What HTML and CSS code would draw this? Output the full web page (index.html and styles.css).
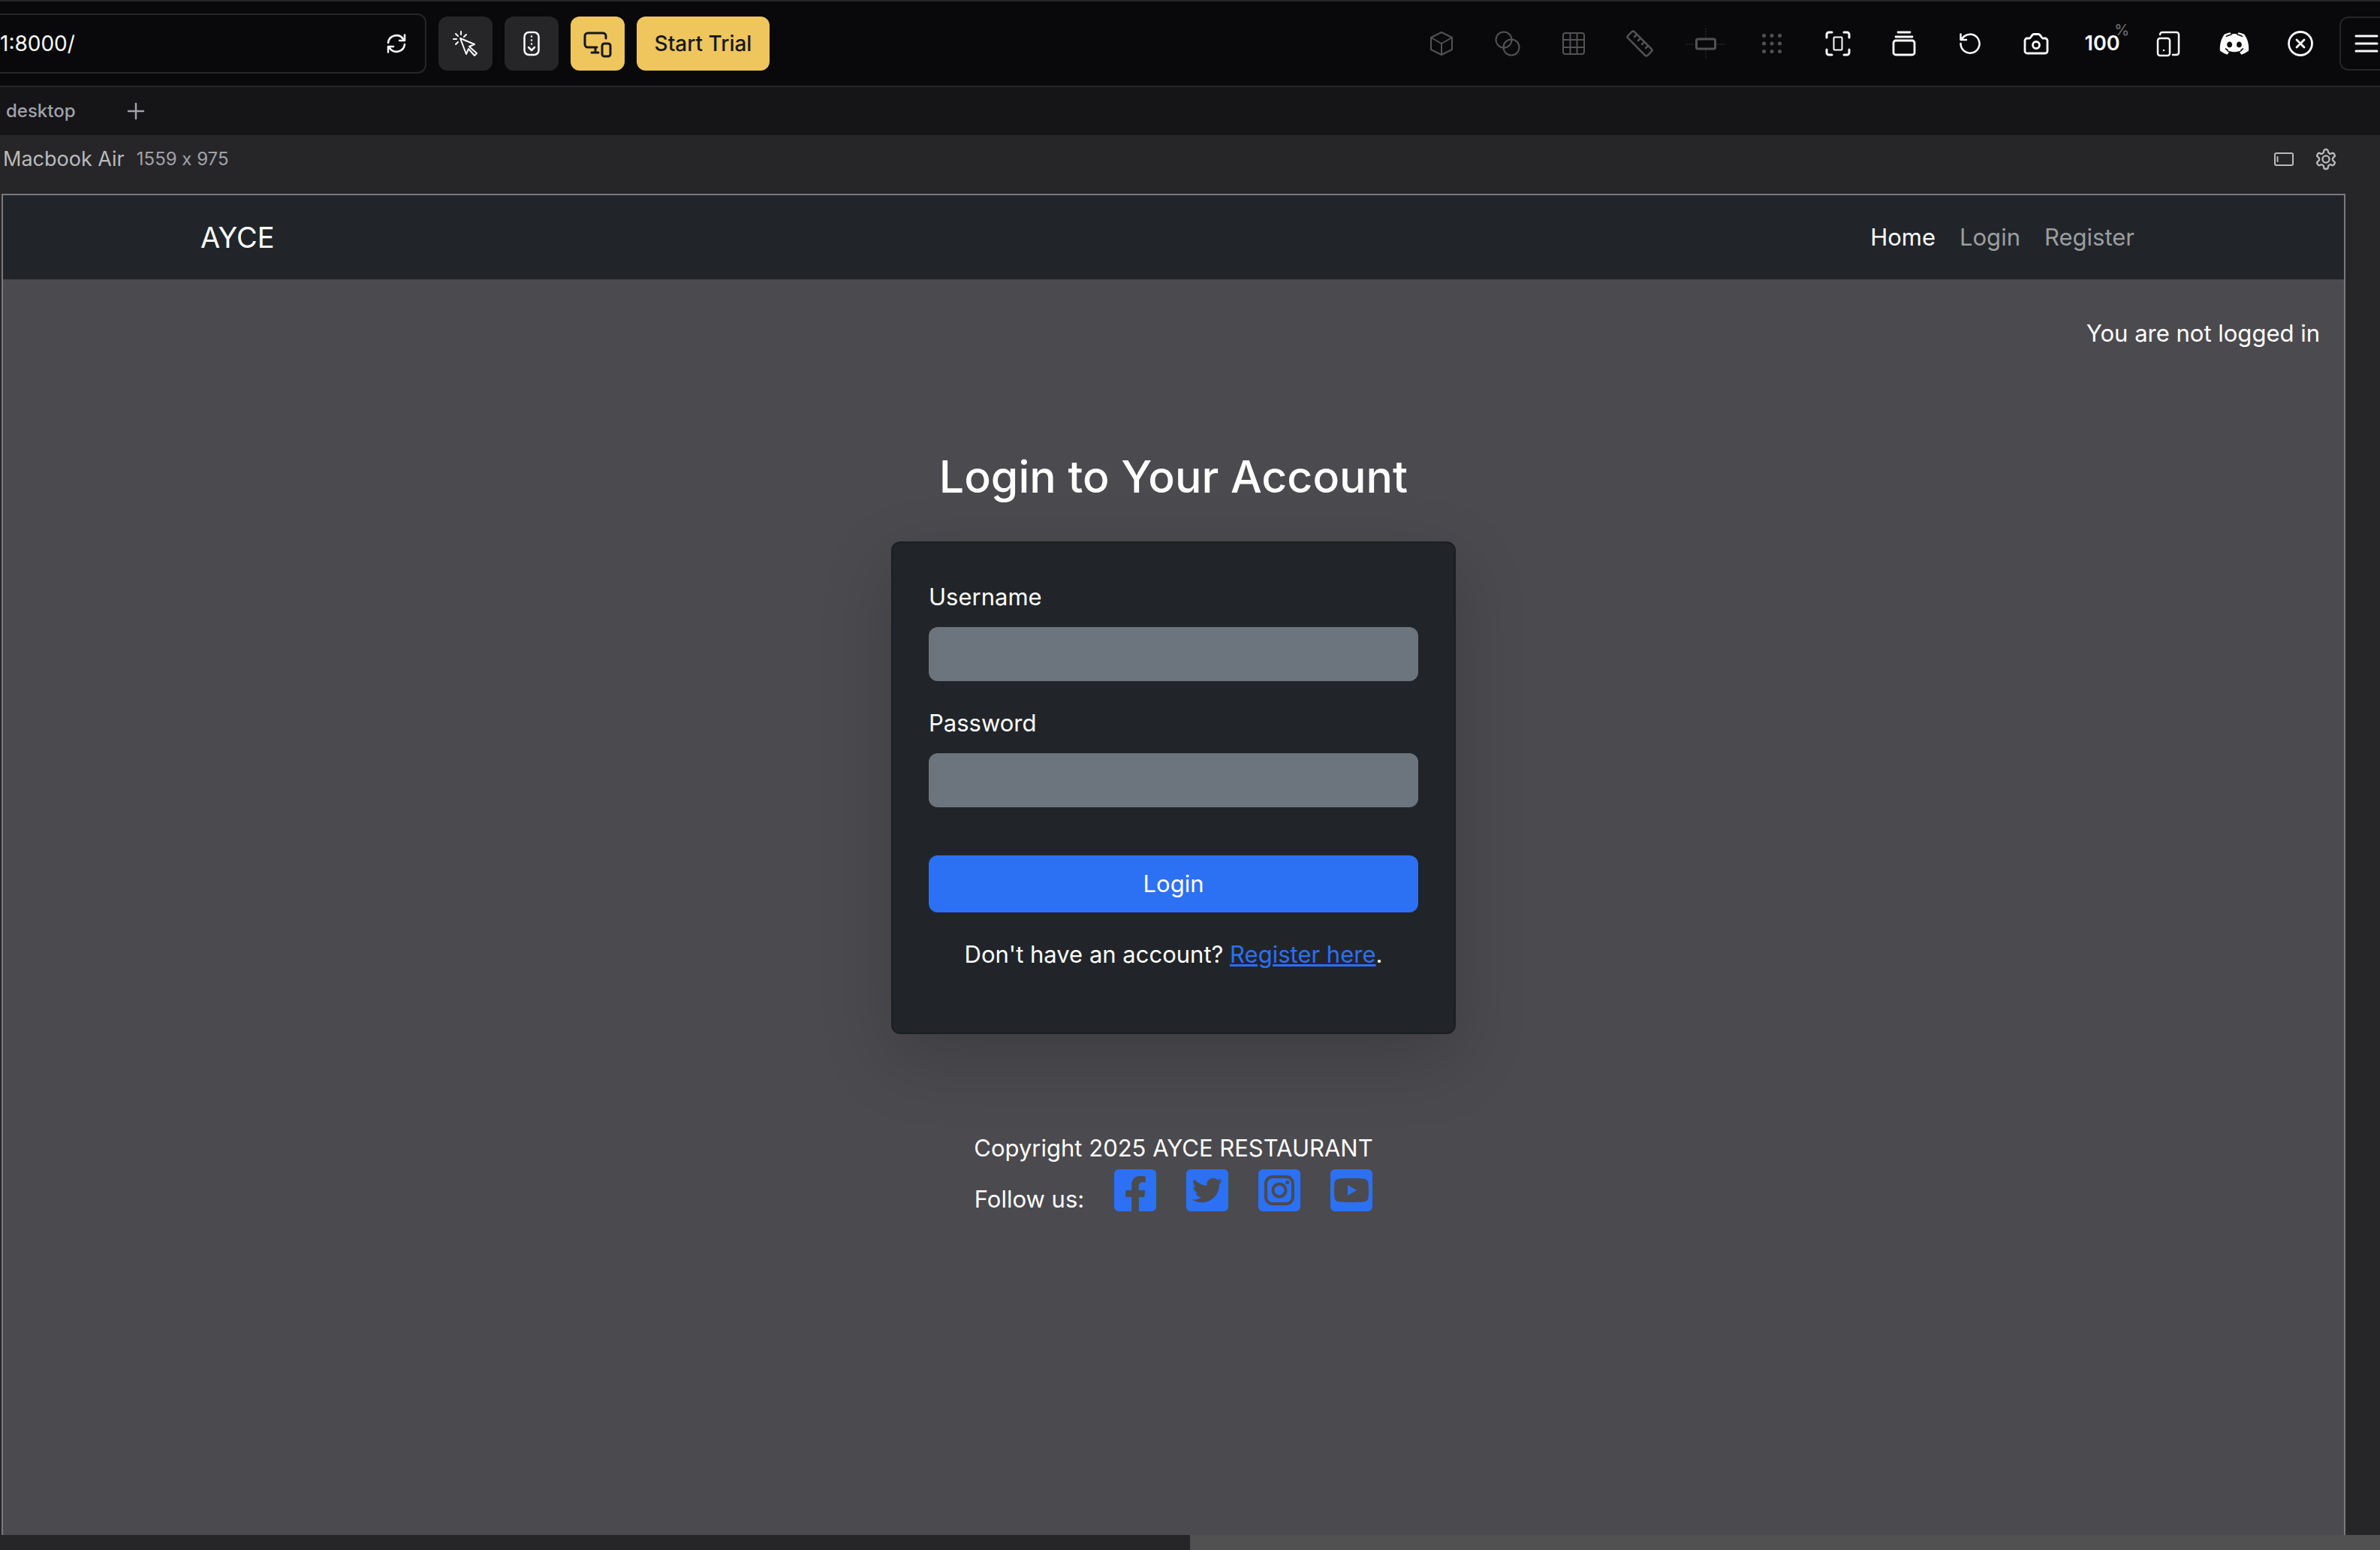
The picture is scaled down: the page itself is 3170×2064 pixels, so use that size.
FILE: index.html
```html
<!DOCTYPE html>
<html lang="en">
<head>
<meta charset="utf-8">
<title>AYCE - Login</title>
<link rel="stylesheet" href="styles.css">
</head>
<body>
<header class="toolbar">
  <div class="address">
    <input class="address-input" type="text" aria-label="Address" value="1:8000/">
    <button class="address-reload" aria-label="Reload">
      <svg class="icon" viewBox="-20 -20 40 40" stroke-width="2.5"><path d="M-11-1A11 11 0 0 1 9-6L11-4M11-11.500V-4H4M11 1A11 11 0 0 1-9 6L-11 4M-11 11.500V4H-4"/></svg>
    </button>
  </div>
  <button class="tool tool-filled" aria-label="Inspect">
    <svg class="icon" viewBox="-20 -20 40 40" stroke-width="2"><path d="M-7-7 12 1 5 4 15 13 12 16 4 7 1 14Z"/><path d="M-6-16V-12M1-12 -2-9M-16-6H-12M-13-13-10-10M-13 1-10-2"/></svg>
  </button>
  <button class="tool tool-filled" aria-label="Scroll sync">
    <svg class="icon" viewBox="-20 -20 40 40" stroke-width="2.500"><rect x="-9.500" y="-15" width="19" height="30" rx="6"/><path d="M-4 5 0 9 4 5M0-9.500h.01M0-4.500h.01M0 .5h.01"/></svg>
  </button>
  <button class="tool tool-accent" aria-label="Devices">
    <svg class="icon" viewBox="-20 -20 40 40" stroke-width="3"><path d="M-1 5H-13A4 4 0 0 1-17 1V-10A4 4 0 0 1-13-14H7A4 4 0 0 1 11-10V-7M-3 5V12M-8 12H1"/><rect x="6" y="0" width="11" height="17" rx="3"/></svg>
  </button>
  <button class="tool tool-accent tool-trial">Start Trial</button>

  <div class="tools">
    <button class="tool tool-dim" aria-label="3D view"><svg class="icon" viewBox="-20 -20 40 40" stroke-width="2"><path d="M0-15 14-8V8L0 15-14 8V-8ZM-14-8 0 0 14-8M0 0V15"/></svg></button>
    <button class="tool tool-dim" aria-label="Overlay"><svg class="icon" viewBox="-20 -20 40 40" stroke-width="2"><circle cx="-5" cy="-5" r="10.500"/><circle cx="5" cy="5" r="10.500"/></svg></button>
    <button class="tool tool-dim" aria-label="Grid"><svg class="icon" viewBox="-20 -20 40 40" stroke-width="2"><rect x="-14" y="-14" width="28" height="28" rx="3"/><path d="M-4.500-14V14M4.500-14V14M-14-5H14M-14 5H14"/></svg></button>
    <button class="tool tool-dim" aria-label="Ruler"><svg class="icon" viewBox="-20 -20 40 40" stroke-width="2.500"><rect x="-18.500" y="-6" width="37" height="12" rx="2.500" transform="rotate(45)"/><path d="M-4-12-7-9M1-7-2-4M6-2 3 1M11 3 8 6"/></svg></button>
    <button class="tool tool-dim" aria-label="Guides"><svg class="icon icon-wide" viewBox="-26 -26 52 52"><rect x="-12.500" y="-6" width="25" height="13" rx="2" stroke-width="3"/><path d="M0-20V-8M0 9V20M-26 1H-15M15 1H26" stroke-width="1.500" stroke-dasharray="1.500 2" stroke-linecap="butt" opacity=".6"/></svg></button>
    <button class="tool tool-dim" aria-label="Dots"><svg class="icon" viewBox="-20 -20 40 40" stroke-width="5"><path d="M-10.500-10.500h.01M0-10.500h.01M10.500-10.500h.01M-10.500 0h.01M0 0h.01M10.500 0h.01M-10.500 10.500h.01M0 10.500h.01M10.500 10.500h.01"/></svg></button>
    <button class="tool" aria-label="Fit to screen"><svg class="icon" viewBox="-20 -20 40 40" stroke-width="3"><path d="M-15-8V-12A3 3 0 0 1-12-15H-8M8-15H12A3 3 0 0 1 15-12V-8M15 8V12A3 3 0 0 1 12 15H8M-8 15H-12A3 3 0 0 1-15 12V8"/><rect x="-5.500" y="-8.500" width="11" height="17" rx="1" stroke-width="2"/></svg></button>
    <button class="tool" aria-label="Stack"><svg class="icon" viewBox="-20 -20 40 40" stroke-width="2.800"><rect x="-14" y="-4" width="28" height="19" rx="3"/><path d="M-11-9H11M-8-15H8"/></svg></button>
    <button class="tool" aria-label="Rotate"><svg class="icon" viewBox="-20 -20 40 40" stroke-width="2.500"><path d="M-12.500 0A12.500 12.500 0 1 0-8.500-9L-12.500-5M-12.500-12.500V-5H-5"/></svg></button>
    <button class="tool" aria-label="Screenshot"><svg class="icon" viewBox="-20 -20 40 40" stroke-width="2.800"><path d="M-12-7H-9C-7-7-6-12.500-3-12.500H3C6-12.500 7-7 9-7H12A3 3 0 0 1 15-4V10A3 3 0 0 1 12 13H-12A3 3 0 0 1-15 10V-4A3 3 0 0 1-12-7Z"/><circle cy="2" r="4.500"/></svg></button>
    <button class="tool tool-zoom" aria-label="Zoom 100%">100<span class="percent">%</span></button>
    <button class="tool" aria-label="Device pair"><svg class="icon" viewBox="-20 -20 40 40" stroke-width="2.500"><path d="M-11-12A3 3 0 0 1-8-15H11A3 3 0 0 1 14-12V12A3 3 0 0 1 11 15H6"/><rect x="-14" y="-7" width="16" height="23" rx="3"/><path d="M-6 9h.01"/></svg></button>
    <button class="tool" aria-label="Discord"><svg class="icon" viewBox="-.5 -.5 25 25"><path fill="currentColor" stroke="none" d="M20.317 4.370a19.791 19.791 0 0 0-4.885-1.515.074.074 0 0 0-.079.037c-.21.375-.444.864-.608 1.250a18.270 18.270 0 0 0-5.487 0 12.640 12.640 0 0 0-.617-1.250.077.077 0 0 0-.079-.037A19.736 19.736 0 0 0 3.677 4.370a.07.07 0 0 0-.032.027C.533 9.046-.32 13.580.099 18.057a.082.082 0 0 0 .031.057 19.900 19.900 0 0 0 5.993 3.030.078.078 0 0 0 .084-.028c.462-.63.874-1.295 1.226-1.994a.076.076 0 0 0-.041-.106 13.107 13.107 0 0 1-1.872-.892.077.077 0 0 1-.008-.128c.126-.094.252-.192.372-.292a.074.074 0 0 1 .077-.010c3.928 1.793 8.180 1.793 12.062 0a.074.074 0 0 1 .078.010c.120.098.246.198.373.292a.077.077 0 0 1-.006.127 12.299 12.299 0 0 1-1.873.892.077.077 0 0 0-.041.107c.36.698.772 1.362 1.225 1.993a.076.076 0 0 0 .084.028 19.839 19.839 0 0 0 6.002-3.030.077.077 0 0 0 .032-.054c.5-5.177-.838-9.674-3.549-13.660a.061.061 0 0 0-.031-.030zM8.020 15.330c-1.183 0-2.157-1.085-2.157-2.419 0-1.333.956-2.419 2.157-2.419 1.210 0 2.176 1.096 2.157 2.420 0 1.333-.956 2.418-2.157 2.418zm7.975 0c-1.183 0-2.157-1.085-2.157-2.419 0-1.333.955-2.419 2.157-2.419 1.210 0 2.176 1.096 2.157 2.420 0 1.333-.946 2.418-2.157 2.418z"/><path class="discord-gap" d="M5.400 6C6.600 5.200 7.800 4.800 9.500 4.500M18.600 6C17.400 5.200 16.200 4.800 14.500 4.500M4.800 16.400 6.500 17.500M19.200 16.400 17.500 17.500"/></svg></button>
    <button class="tool" aria-label="Close"><svg class="icon" viewBox="-20 -20 40 40" stroke-width="2.800"><circle r="15.500"/><path d="M-5-5 5 5M5-5-5 5"/></svg></button>
    <button class="tool tool-menu" aria-label="Menu"><svg class="icon" viewBox="-20 -20 40 40" stroke-width="3"><path d="M-14-10H14M-14 0H14M-14 10H14"/></svg></button>
  </div>
</header>

<div class="tabs">
  <a class="tab" href="#">desktop</a>
  <button class="tab-add" aria-label="New tab"><svg class="icon" viewBox="-20 -20 40 40" stroke-width="2.500"><path d="M-10 0H10M0-10V10"/></svg></button>
</div>

<div class="device">
  <div class="device-bar">
    <span class="device-name">Macbook Air</span>
    <span class="device-size">1559 x 975</span>
    <span class="device-actions">
      <button class="device-button" aria-label="Orientation"><svg class="icon" viewBox="-20 -20 40 40" stroke-width="2"><rect x="-12" y="-8" width="24" height="16" rx="2"/><path d="M-8.500-3V3"/></svg></button>
      <button class="device-button" aria-label="Settings"><svg class="icon" viewBox="-3.400 -3.400 30.800 30.800" stroke-width="1.800"><path d="M12.220 2h-.44a2 2 0 0 0-2 2v.18a2 2 0 0 1-1 1.730l-.43.25a2 2 0 0 1-2 0l-.15-.08a2 2 0 0 0-2.730.73l-.22.38a2 2 0 0 0 .73 2.730l.15.100a2 2 0 0 1 1 1.720v.51a2 2 0 0 1-1 1.740l-.15.090a2 2 0 0 0-.73 2.730l.22.380a2 2 0 0 0 2.730.730l.15-.080a2 2 0 0 1 2 0l.43.250a2 2 0 0 1 1 1.730V20a2 2 0 0 0 2 2h.44a2 2 0 0 0 2-2v-.18a2 2 0 0 1 1-1.730l.43-.25a2 2 0 0 1 2 0l.15.080a2 2 0 0 0 2.730-.730l.22-.390a2 2 0 0 0-.73-2.730l-.15-.080a2 2 0 0 1-1-1.740v-.5a2 2 0 0 1 1-1.740l.15-.090a2 2 0 0 0 .73-2.730l-.22-.380a2 2 0 0 0-2.730-.730l-.15.080a2 2 0 0 1-2 0l-.43-.25a2 2 0 0 1-1-1.730V4a2 2 0 0 0-2-2z"/><circle cx="12" cy="12" r="3.500"/></svg></button>
    </span>
  </div>

  <div class="screen">
    <nav class="navbar">
      <div class="container">
        <a class="brand" href="#">AYCE</a>
        <div class="nav-links">
          <a class="nav-link active" href="#">Home</a>
          <a class="nav-link" href="#">Login</a>
          <a class="nav-link" href="#">Register</a>
        </div>
      </div>
    </nav>

    <p class="user-status">You are not logged in</p>

    <main class="login">
      <h1 class="login-title">Login to Your Account</h1>
      <form class="card">
        <label class="label" for="username">Username</label>
        <input class="field" type="text" id="username">
        <label class="label" for="password">Password</label>
        <input class="field" type="password" id="password">
        <button class="submit" type="button">Login</button>
        <p class="hint">Don't have an account? <a class="link" href="#">Register here</a>.</p>
      </form>
    </main>

    <footer class="footer">
      <p class="copyright">Copyright 2025 AYCE RESTAURANT</p>
      <div class="social">
        <span class="social-label">Follow us:</span>
        <a class="social-link" href="#" aria-label="Facebook"><svg class="social-icon" viewBox="0 32 448 448"><path d="M400 32H48A48 48 0 0 0 0 80v352a48 48 0 0 0 48 48h137.250V327.690h-63V256h63v-54.640c0-62.150 37-96.480 93.670-96.480 27.140 0 55.520 4.840 55.520 4.840v61h-31.270c-30.810 0-40.420 19.120-40.420 38.730V256h68.780l-11 71.690h-57.780V480H400a48 48 0 0 0 48-48V80a48 48 0 0 0-48-48z"/></svg></a>
        <a class="social-link" href="#" aria-label="Twitter"><svg class="social-icon" viewBox="0 32 448 448"><path d="M400 32H48C21.500 32 0 53.500 0 80v352c0 26.500 21.500 48 48 48h352c26.500 0 48-21.500 48-48V80c0-26.500-21.500-48-48-48zm-48.900 158.800c.2 2.800.2 5.700.2 8.500 0 86.700-66 186.600-186.600 186.600-37.200 0-71.700-10.800-100.700-29.400 5.300.6 10.400.8 15.800.8 30.700 0 58.900-10.400 81.400-28-28.800-.6-53-19.500-61.300-45.500 10.100 1.500 19.200 1.500 29.600-1.200-30-6.100-52.500-32.500-52.500-64.400v-.8c8.700 4.900 18.900 7.900 29.600 8.300a65.447 65.447 0 0 1-29.200-54.600c0-12.200 3.200-23.400 8.900-33.100 32.300 39.800 80.800 65.800 135.200 68.600-9.300-44.500 24-80.600 64-80.600 18.900 0 35.900 7.900 47.900 20.700 14.800-2.800 29-8.300 41.600-15.800-4.900 15.200-15.200 28-28.800 36.100 13.200-1.400 26-5.100 37.800-10.200-8.900 13.100-20.100 24.700-32.900 34z"/></svg></a>
        <a class="social-link" href="#" aria-label="Instagram"><svg class="social-icon" viewBox="0 0 56 56"><rect width="56" height="56" rx="6"/><g class="cutout-line"><rect x="10" y="10" width="36" height="36" rx="9"/><circle cx="28" cy="28" r="8.500"/></g><circle class="cutout" cx="38.600" cy="17.400" r="2.500"/></svg></a>
        <a class="social-link" href="#" aria-label="YouTube"><svg class="social-icon" viewBox="0 0 56 56"><rect width="56" height="56" rx="6"/><path class="cutout" d="M28 12C38 12 44 12.300 46 13 48.500 13.700 49.700 15 50.300 17.500 51.200 22 51.200 34 50.300 38.500 49.700 41 48.500 42.300 46 43 42 44.300 14 44.300 10 43 7.500 42.300 6.300 41 5.700 38.500 4.800 34 4.800 22 5.700 17.500 6.300 15 7.500 13.700 10 13 12 12.300 18 12 28 12Z"/><path d="M23 21 35 28 23 35Z"/></svg></a>
      </div>
    </footer>
  </div>
</div>
<div class="scrollbar"><div class="scrollbar-thumb"></div></div>
</body>
</html>
```
FILE: styles.css
```css
* {
  box-sizing: border-box;
}

body {
  display: flex;
  flex-direction: column;
  min-height: 100vh;
  margin: 0;
  overflow-x: hidden;
  background: #262628;
  color: #fff;
  font: 400 31px/48px Inter, "Liberation Sans", sans-serif;
}

p, h1 {
  margin: 0;
}

a {
  color: inherit;
  text-decoration: none;
}

button, input {
  padding: 0;
  border: 0;
  background: none;
  color: inherit;
  font: inherit;
}

.icon {
  display: block;
  flex: none;
  width: 40px;
  height: 40px;
  fill: none;
  stroke: currentColor;
  stroke-linecap: round;
  stroke-linejoin: round;
}

.icon-wide {
  width: 52px;
  height: 52px;
}

.discord-gap {
  stroke: #09090b;
}

/* Browser toolbar */
.toolbar {
  display: flex;
  align-items: center;
  gap: 16px;
  height: 116px;
  border-top: 2px solid #262628;
  border-bottom: 2px solid #262628;
  background: #09090b;
  color: #fafafa;
}

.address {
  display: flex;
  align-items: center;
  width: 568px;
  height: 80px;
  padding-right: 18px;
  border: 2px solid #262628;
  border-left: 0;
  border-radius: 0 12px 12px 0;
}

.address-input {
  flex: 1;
  min-width: 0;
  font-size: 28px;
}

.tool {
  display: flex;
  flex: none;
  align-items: center;
  justify-content: center;
  width: 72px;
  height: 72px;
  border-radius: 12px;
}

.tool-filled {
  background: #262628;
}

.tool-accent {
  background: #eec65d;
  color: #18181b;
}

.tool-trial {
  width: 177px;
  font-size: 28px;
  font-weight: 500;
}

.tools {
  display: flex;
  gap: 16px;
  margin-left: auto;
}

.tool-dim {
  color: #525252;
}

.tool-zoom {
  position: relative;
  font-size: 27px;
  font-weight: 600;
}

.percent {
  position: absolute;
  top: 8px;
  right: 0;
  color: #6b6b6b;
  font-size: 20px;
  font-weight: 500;
  line-height: 20px;
}

.tool-menu {
  justify-content: flex-start;
  width: 54px;
  padding-left: 14px;
  border: 2px solid #262628;
  border-right: 0;
  border-radius: 12px 0 0 12px;
}

/* Tabs */
.tabs {
  display: flex;
  align-items: center;
  gap: 60px;
  height: 64px;
  padding-left: 8px;
  background: #151517;
  color: #a1a1aa;
  font-size: 24px;
  font-weight: 500;
}

/* Device preview */
.device {
  display: flex;
  flex: 1;
  flex-direction: column;
  padding: 0 46px 0 2px;
}

.device-bar {
  display: flex;
  align-items: center;
  gap: 16px;
  height: 78px;
  padding: 0 6px 14px 2px;
}

.device-name {
  color: #bababa;
  font-size: 27px;
}

.device-size {
  color: #a1a1aa;
  font-size: 24px;
  font-feature-settings: "calt" 0;
}

.device-actions {
  display: flex;
  gap: 16px;
  margin-left: auto;
  color: #bababa;
}

.screen {
  flex: 1;
  border: 2px solid #7a7a7d;
  border-bottom: 0;
  background: #4b4a4e;
}

.navbar {
  padding: 0 24px;
  background: #212529;
}

.container {
  display: flex;
  align-items: center;
  justify-content: space-between;
  max-width: 2592px;
  height: 112px;
  margin: 0 auto;
}

.brand {
  font-size: 38px;
}

.nav-links {
  display: flex;
}

.nav-link {
  padding: 0 16px;
  color: #9b9d9f;
}

.nav-link.active {
  color: #fff;
}

.user-status {
  padding: 48px 32px 0;
  text-align: right;
}

/* Login form */
.login {
  width: 752px;
  max-width: 100%;
  margin: 128px auto 0;
}

.login-title {
  margin-bottom: 48px;
  font-size: 59px;
  font-weight: 500;
  line-height: 77px;
  text-align: center;
}

.card {
  display: flex;
  flex-direction: column;
  padding: 48px 48px 80px;
  border: 2px solid #1b1e22;
  border-radius: 12px;
  background: #212529;
  box-shadow: 0 32px 96px rgba(0, 0, 0, 0.175);
}

.label {
  margin-bottom: 16px;
}

.field {
  height: 72px;
  margin-bottom: 32px;
  padding: 0 24px;
  border-radius: 12px;
  background: #6c757d;
}

.submit {
  height: 76px;
  margin: 32px 0;
  border-radius: 12px;
  background: #2c70f4;
}

.hint {
  text-align: center;
}

.link {
  color: #2c70f4;
  text-decoration: underline;
  text-decoration-thickness: 3px;
}

/* Footer */
.footer {
  padding: 128px 0 48px;
  text-align: center;
}

.social {
  display: flex;
  justify-content: center;
  gap: 40px;
  padding-top: 4px;
}

.social-label {
  padding-top: 16px;
}

.social-icon {
  display: block;
  width: 56px;
  height: 56px;
  fill: #2c70f4;
}

.cutout {
  fill: #4b4a4e;
}

.cutout-line {
  fill: none;
  stroke: #4b4a4e;
  stroke-width: 4;
}

/* Horizontal scroll track */
.scrollbar {
  display: flex;
  justify-content: flex-end;
  height: 20px;
  background: #262628;
}

.scrollbar-thumb {
  width: 50%;
  background: #515152;
}
```
